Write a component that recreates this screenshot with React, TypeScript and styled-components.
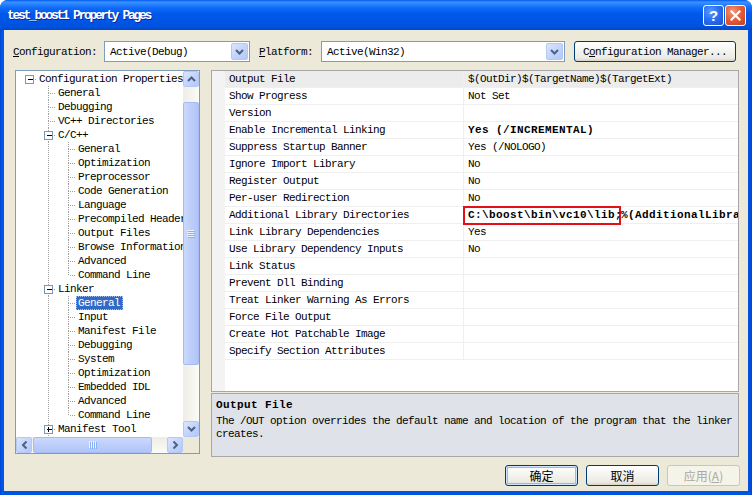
import React from 'react';
import styled, { createGlobalStyle } from 'styled-components';

const MONO = `"Liberation Mono", "DejaVu Sans Mono", monospace`;
const CJK = `"Noto Sans CJK SC", "Liberation Sans", sans-serif`;

const GlobalStyle = createGlobalStyle`
  html, body { margin: 0; padding: 0; background: #ffffff; }
  body {
    font-family: ${MONO};
    font-size: 11px;
    letter-spacing: -0.6px;
    color: #000;
  }
  #root { width: 752px; height: 495px; }
`;

const Window = styled.div`
  width: 752px;
  height: 495px;
  display: flex;
  flex-direction: column;
  border-radius: 8px 8px 0 0;
  overflow: hidden;
  background: #0054e3;
`;

const TitleBar = styled.div`
  height: 30px;
  flex: none;
  display: flex;
  align-items: center;
  justify-content: space-between;
  padding: 0 6px 0 7px;
  box-sizing: border-box;
  background: linear-gradient(180deg, #0058ee 0px, #3a93ff 2px, #2b85ff 4px, #0f6af8 8px, #0058eb 14px, #0055e5 22px, #0051dd 27px, #0046c7 30px);
`;

const Title = styled.div`
  color: #fff;
  font-family: ${MONO};
  font-weight: bold;
  font-size: 13px;
  letter-spacing: -2.3px;
  text-shadow: 1px 1px 0 #0a2a9a;
`;

const CaptionButtons = styled.div`
  display: flex;
  gap: 1px;
`;

const CaptionButton = styled.div<{ $close?: boolean }>`
  width: 21px;
  height: 21px;
  box-sizing: border-box;
  border: 1px solid #fff;
  border-radius: 3px;
  display: flex;
  align-items: center;
  justify-content: center;
  color: #fff;
  font-family: "Liberation Sans", sans-serif;
  font-weight: bold;
  font-size: 15px;
  letter-spacing: 0;
  background: ${p => p.$close
    ? 'radial-gradient(circle at 35% 30%, #f09a7c 0%, #e2603d 45%, #c5401a 100%)'
    : 'radial-gradient(circle at 35% 30%, #5b9bff 0%, #2d6ff0 45%, #1b50cf 100%)'};
`;

const Frame = styled.div`
  flex: 1;
  display: flex;
  padding: 0 4px 4px;
  background: linear-gradient(90deg, #0044cc 0px, #0058ee 2px, #0054e3 4px, #0054e3 calc(100% - 4px), #0047d0 100%);
`;

const Client = styled.div`
  flex: 1;
  background: #ece9d8;
  display: flex;
  flex-direction: column;
`;

const TopRow = styled.div`
  margin-top: 11px;
  height: 21px;
  padding-left: 9px;
  display: flex;
  align-items: center;
`;

const Label = styled.span<{ $gap: number }>`
  margin-right: ${p => p.$gap}px;
  white-space: nowrap;
`;

const Combo = styled.div<{ $width: number }>`
  width: ${p => p.$width}px;
  height: 21px;
  box-sizing: border-box;
  border: 1px solid #7f9db9;
  background: #fff;
  display: flex;
  align-items: center;
  padding: 1px;
  margin-right: 9px;
`;

const ComboText = styled.span`
  flex: 1;
  padding-left: 4px;
  white-space: nowrap;
`;

const ArrowBox = styled.div<{ $w: number; $h: number }>`
  width: ${p => p.$w}px;
  height: ${p => p.$h}px;
  flex: none;
  box-sizing: border-box;
  border: 1px solid #b4c8f6;
  border-radius: 2px;
  background: linear-gradient(135deg, #dbe6fe 0%, #c6d6fc 45%, #b3c8f7 100%);
  display: flex;
  align-items: center;
  justify-content: center;
`;

const ArrowSvg = styled.svg<{ $rot: number }>`
  transform: rotate(${p => p.$rot}deg);
`;

const Chevron: React.FC<{ dir: 'up' | 'down' | 'left' | 'right' }> = ({ dir }) => {
  const rot = { down: 0, up: 180, left: 90, right: -90 }[dir];
  return (
    <ArrowSvg $rot={rot} width="9" height="6" viewBox="0 0 9 6">
      <path d="M1 1 L4.5 4.5 L8 1" fill="none" stroke="#4d6185" strokeWidth="2" />
    </ArrowSvg>
  );
};

const Button = styled.div<{ $width: number; $default?: boolean; $disabled?: boolean }>`
  width: ${p => p.$width}px;
  height: 21px;
  box-sizing: border-box;
  border: 1px solid ${p => (p.$disabled ? '#c9c7ba' : '#003c74')};
  border-radius: 3px;
  display: flex;
  align-items: center;
  justify-content: center;
  white-space: nowrap;
  color: ${p => (p.$disabled ? '#aca899' : '#000')};
  background: ${p => p.$disabled
    ? '#f5f4ea'
    : 'linear-gradient(180deg, #ffffff 0%, #f4f4f0 45%, #ebeae3 85%, #d8d3c8 100%)'};
  box-shadow: ${p => (p.$default ? 'inset 0 0 0 1px #cee7ff, inset 0 0 0 2px #98b8ea' : 'none')};
`;

const CjkText = styled.span`
  font-family: ${CJK};
  font-size: 12px;
  letter-spacing: 0;
`;

const Body = styled.div`
  margin-top: 8px;
  height: 387px;
  padding-left: 11px;
  display: flex;
  align-items: flex-start;
  gap: 11px;
`;

/* ---------- tree ---------- */

const TreeBox = styled.div`
  width: 185px;
  height: 384px;
  box-sizing: border-box;
  border: 1px solid #7f9db9;
  background: #fff;
  display: flex;
  flex-direction: column;
`;

const TreeMain = styled.div`
  flex: 1;
  display: flex;
  min-height: 0;
`;

const TreeViewport = styled.div`
  flex: 1;
  min-width: 0;
  overflow: hidden;
  padding-top: 1px;
`;

const TreeRow = styled.div`
  height: 14px;
  display: flex;
  align-items: center;
  white-space: nowrap;
`;

const LinesSvg = styled.svg`
  flex: none;
  display: block;
`;

const TreeLabel = styled.span<{ $selected?: boolean }>`
  flex: none;
  height: 14px;
  line-height: 14px;
  padding: 0 3px 0 2px;
  box-sizing: border-box;
  background: ${p => (p.$selected ? '#316ac5' : 'transparent')};
  color: ${p => (p.$selected ? '#fff' : '#000')};
  outline: ${p => (p.$selected ? '1px dotted #a9c1ea' : 'none')};
  outline-offset: -1px;
`;

const VScroll = styled.div`
  width: 16px;
  flex: none;
  display: flex;
  flex-direction: column;
  background: linear-gradient(90deg, #eeede5 0%, #fbfbf8 100%);
`;

const VTrack = styled.div`
  flex: 1;
  padding-top: 15px;
`;

const VThumb = styled.div`
  height: 263px;
  box-sizing: border-box;
  border: 1px solid #a4bcf3;
  border-radius: 2px;
  background: linear-gradient(90deg, #cbd9fc 0%, #bccefb 50%, #b1c5f6 100%);
  display: flex;
  align-items: center;
  justify-content: center;
`;

const HScrollRow = styled.div`
  height: 16px;
  flex: none;
  display: flex;
`;

const HScroll = styled.div`
  flex: 1;
  display: flex;
  background: linear-gradient(180deg, #eeede5 0%, #fbfbf8 100%);
`;

const HTrack = styled.div`
  flex: 1;
  padding-left: 1px;
  display: flex;
`;

const HThumb = styled.div`
  width: 119px;
  box-sizing: border-box;
  border: 1px solid #a4bcf3;
  border-radius: 2px;
  background: linear-gradient(180deg, #cbd9fc 0%, #bccefb 50%, #b1c5f6 100%);
  display: flex;
  align-items: center;
  justify-content: center;
`;

const Corner = styled.div`
  width: 16px;
  background: #ece9d8;
`;

/* ---------- grid ---------- */

const GridColumn = styled.div`
  width: 528px;
  display: flex;
  flex-direction: column;
`;

const Grid = styled.div`
  height: 322px;
  box-sizing: border-box;
  border: 1px solid #a7a6aa;
  background: #fff;
  display: flex;
  overflow: hidden;
`;

const Gutter = styled.div`
  width: 13px;
  flex: none;
  background: #f3f3f3;
`;

const GridRows = styled.div`
  flex: 1;
  min-width: 0;
  display: flex;
  flex-direction: column;
`;

const PropRow = styled.div<{ $selected?: boolean }>`
  height: 17px;
  flex: none;
  box-sizing: border-box;
  border-bottom: 1px solid #efefef;
  display: flex;
  background: ${p => (p.$selected ? '#ececec' : '#fff')};
`;

const NameCell = styled.div`
  width: 238px;
  flex: none;
  box-sizing: border-box;
  padding-left: 4px;
  display: flex;
  align-items: center;
  white-space: nowrap;
  overflow: hidden;
`;

const ValueCell = styled.div<{ $bold?: boolean }>`
  flex: 1;
  border-left: 1px solid #efefef;
  padding-left: 4px;
  display: flex;
  align-items: center;
  white-space: nowrap;
  font-weight: ${p => (p.$bold ? 'bold' : 'normal')};
  letter-spacing: ${p => (p.$bold ? '0.4px' : '-0.6px')};
`;

const Marked = styled.span`
  position: relative;
  z-index: 1;
  width: 158px;
  height: 19px;
  flex: none;
  box-sizing: border-box;
  margin-left: -5px;
  padding-left: 3px;
  border: 2px solid #e3101a;
  display: flex;
  align-items: center;
  overflow: visible;
`;

const Description = styled.div`
  height: 64px;
  margin-top: 1px;
  box-sizing: border-box;
  border: 1px solid #a7a6aa;
  background: #dfe2e8;
  padding: 4px 4px 0;
  overflow: hidden;
`;

const DescTitle = styled.div`
  font-weight: bold;
  letter-spacing: 0.4px;
  line-height: 14px;
`;

const DescText = styled.div`
  margin-top: 3px;
  line-height: 13px;
  white-space: nowrap;
`;

const ButtonRow = styled.div`
  margin-top: 8px;
  padding-right: 8px;
  display: flex;
  justify-content: flex-end;
  gap: 8px;
`;

/* ---------- data ---------- */

interface TreeNode {
  label: string;
  children?: TreeNode[];
  open?: boolean;
  selected?: boolean;
  more?: boolean; // further siblings below, scrolled out of view
}

interface FlatRow {
  label: string;
  level: number;
  last: boolean;
  cont: boolean[];
  hasKids: boolean;
  open: boolean;
  selected: boolean;
}

const leaves = (names: string[]): TreeNode[] => names.map(label => ({ label }));

const tree: TreeNode[] = [
  {
    label: 'Configuration Properties',
    open: true,
    children: [
      { label: 'General' },
      { label: 'Debugging' },
      { label: 'VC++ Directories' },
      {
        label: 'C/C++',
        open: true,
        children: leaves([
          'General', 'Optimization', 'Preprocessor', 'Code Generation', 'Language',
          'Precompiled Headers', 'Output Files', 'Browse Information', 'Advanced', 'Command Line',
        ]),
      },
      {
        label: 'Linker',
        open: true,
        children: [
          { label: 'General', selected: true },
          ...leaves(['Input', 'Manifest File', 'Debugging', 'System', 'Optimization', 'Embedded IDL', 'Advanced', 'Command Line']),
        ],
      },
      { label: 'Manifest Tool', children: [], more: true },
    ],
  },
];

const flatten = (nodes: TreeNode[], level: number, cont: boolean[], out: FlatRow[]): FlatRow[] => {
  nodes.forEach((n, i) => {
    const last = i === nodes.length - 1 && !n.more;
    out.push({
      label: n.label,
      level,
      last,
      cont,
      hasKids: !!n.children,
      open: !!n.open,
      selected: !!n.selected,
    });
    if (n.children && n.open) flatten(n.children, level + 1, [...cont, !last], out);
  });
  return out;
};

const CX = [13, 32, 52, 72];
const TEXT_X = [21, 40, 60, 80];
const DOT = { stroke: '#a0a0a0', strokeWidth: 1, strokeDasharray: '1 1' };

const TreeLines: React.FC<{ row: FlatRow }> = ({ row }) => {
  const w = TEXT_X[row.level];
  const c = CX[row.level] + 0.5;
  return (
    <LinesSvg width={w} height={14} viewBox={`0 0 ${w} 14`} shapeRendering="crispEdges">
      {row.cont.map((on, a) =>
        on && a > 0 ? <line key={a} x1={CX[a] + 0.5} y1={0} x2={CX[a] + 0.5} y2={14} {...DOT} /> : null
      )}
      {row.level > 0 && <line x1={c} y1={0} x2={c} y2={7} {...DOT} />}
      {row.level > 0 && !row.last && <line x1={c} y1={7} x2={c} y2={14} {...DOT} />}
      <line x1={c + 1} y1={7.5} x2={w} y2={7.5} {...DOT} />
      {row.hasKids && (
        <g>
          <rect x={c - 4} y={3.5} width={8} height={8} fill="#fff" stroke="#7898b5" />
          <line x1={c - 2} y1={7.5} x2={c + 3} y2={7.5} stroke="#000" />
          {!row.open && <line x1={c} y1={5} x2={c} y2={10} stroke="#000" />}
        </g>
      )}
    </LinesSvg>
  );
};

const Grip: React.FC<{ vertical?: boolean }> = ({ vertical }) => (
  <svg width={8} height={8} viewBox="0 0 8 8" shapeRendering="crispEdges">
    {[0, 2, 4, 6].map(i =>
      vertical ? (
        <g key={i}>
          <line x1={0} y1={i + 0.5} x2={7} y2={i + 0.5} stroke="#eef4fe" />
          <line x1={1} y1={i + 1.5} x2={8} y2={i + 1.5} stroke="#8cb0f8" />
        </g>
      ) : (
        <g key={i}>
          <line x1={i + 0.5} y1={0} x2={i + 0.5} y2={7} stroke="#eef4fe" />
          <line x1={i + 1.5} y1={1} x2={i + 1.5} y2={8} stroke="#8cb0f8" />
        </g>
      )
    )}
  </svg>
);

interface Prop {
  name: string;
  value?: React.ReactNode;
  bold?: boolean;
}

const props: Prop[] = [
  { name: 'Output File', value: '$(OutDir)$(TargetName)$(TargetExt)' },
  { name: 'Show Progress', value: 'Not Set' },
  { name: 'Version' },
  { name: 'Enable Incremental Linking', value: 'Yes (/INCREMENTAL)', bold: true },
  { name: 'Suppress Startup Banner', value: 'Yes (/NOLOGO)' },
  { name: 'Ignore Import Library', value: 'No' },
  { name: 'Register Output', value: 'No' },
  { name: 'Per-user Redirection', value: 'No' },
  {
    name: 'Additional Library Directories',
    bold: true,
    value: (
      <>
        <Marked>C:\boost\bin\vc10\lib;</Marked>
        <span>%(AdditionalLibraryDirectories)</span>
      </>
    ),
  },
  { name: 'Link Library Dependencies', value: 'Yes' },
  { name: 'Use Library Dependency Inputs', value: 'No' },
  { name: 'Link Status' },
  { name: 'Prevent Dll Binding' },
  { name: 'Treat Linker Warning As Errors' },
  { name: 'Force File Output' },
  { name: 'Create Hot Patchable Image' },
  { name: 'Specify Section Attributes' },
];

const App: React.FC = () => {
  const rows = flatten(tree, 0, [], []);

  return (
    <>
      <GlobalStyle />
      <Window>
        <TitleBar>
          <Title>test_boost1 Property Pages</Title>
          <CaptionButtons>
            <CaptionButton>?</CaptionButton>
            <CaptionButton $close>
              <svg width="11" height="11" viewBox="0 0 11 11">
                <path d="M1.5 1.5 L9.5 9.5 M9.5 1.5 L1.5 9.5" stroke="#fff" strokeWidth="2.2" strokeLinecap="square" />
              </svg>
            </CaptionButton>
          </CaptionButtons>
        </TitleBar>

        <Frame>
          <Client>
            <TopRow>
              <Label $gap={7}><u>C</u>onfiguration:</Label>
              <Combo $width={146}>
                <ComboText>Active(Debug)</ComboText>
                <ArrowBox $w={17} $h={17}><Chevron dir="down" /></ArrowBox>
              </Combo>
              <Label $gap={8}><u>P</u>latform:</Label>
              <Combo $width={244}>
                <ComboText>Active(Win32)</ComboText>
                <ArrowBox $w={17} $h={17}><Chevron dir="down" /></ArrowBox>
              </Combo>
              <Button $width={162}>C<u>o</u>nfiguration Manager...</Button>
            </TopRow>

            <Body>
              <TreeBox>
                <TreeMain>
                  <TreeViewport>
                    {rows.map((r, i) => (
                      <TreeRow key={i}>
                        <TreeLines row={r} />
                        <TreeLabel $selected={r.selected}>{r.label}</TreeLabel>
                      </TreeRow>
                    ))}
                  </TreeViewport>
                  <VScroll>
                    <ArrowBox $w={16} $h={16}><Chevron dir="up" /></ArrowBox>
                    <VTrack>
                      <VThumb><Grip vertical /></VThumb>
                    </VTrack>
                    <ArrowBox $w={16} $h={16}><Chevron dir="down" /></ArrowBox>
                  </VScroll>
                </TreeMain>
                <HScrollRow>
                  <HScroll>
                    <ArrowBox $w={16} $h={16}><Chevron dir="left" /></ArrowBox>
                    <HTrack>
                      <HThumb><Grip /></HThumb>
                    </HTrack>
                    <ArrowBox $w={16} $h={16}><Chevron dir="right" /></ArrowBox>
                  </HScroll>
                  <Corner />
                </HScrollRow>
              </TreeBox>

              <GridColumn>
                <Grid>
                  <Gutter />
                  <GridRows>
                    {props.map((p, i) => (
                      <PropRow key={p.name} $selected={i === 0}>
                        <NameCell>{p.name}</NameCell>
                        <ValueCell $bold={p.bold}>{p.value}</ValueCell>
                      </PropRow>
                    ))}
                  </GridRows>
                </Grid>
                <Description>
                  <DescTitle>Output File</DescTitle>
                  <DescText>
                    The /OUT option overrides the default name and location of the program that the linker
                    <br />
                    creates.
                  </DescText>
                </Description>
              </GridColumn>
            </Body>

            <ButtonRow>
              <Button $width={73} $default><CjkText>确定</CjkText></Button>
              <Button $width={73}><CjkText>取消</CjkText></Button>
              <Button $width={73} $disabled><CjkText>应用(<u>A</u>)</CjkText></Button>
            </ButtonRow>
          </Client>
        </Frame>
      </Window>
    </>
  );
};

export default App;
